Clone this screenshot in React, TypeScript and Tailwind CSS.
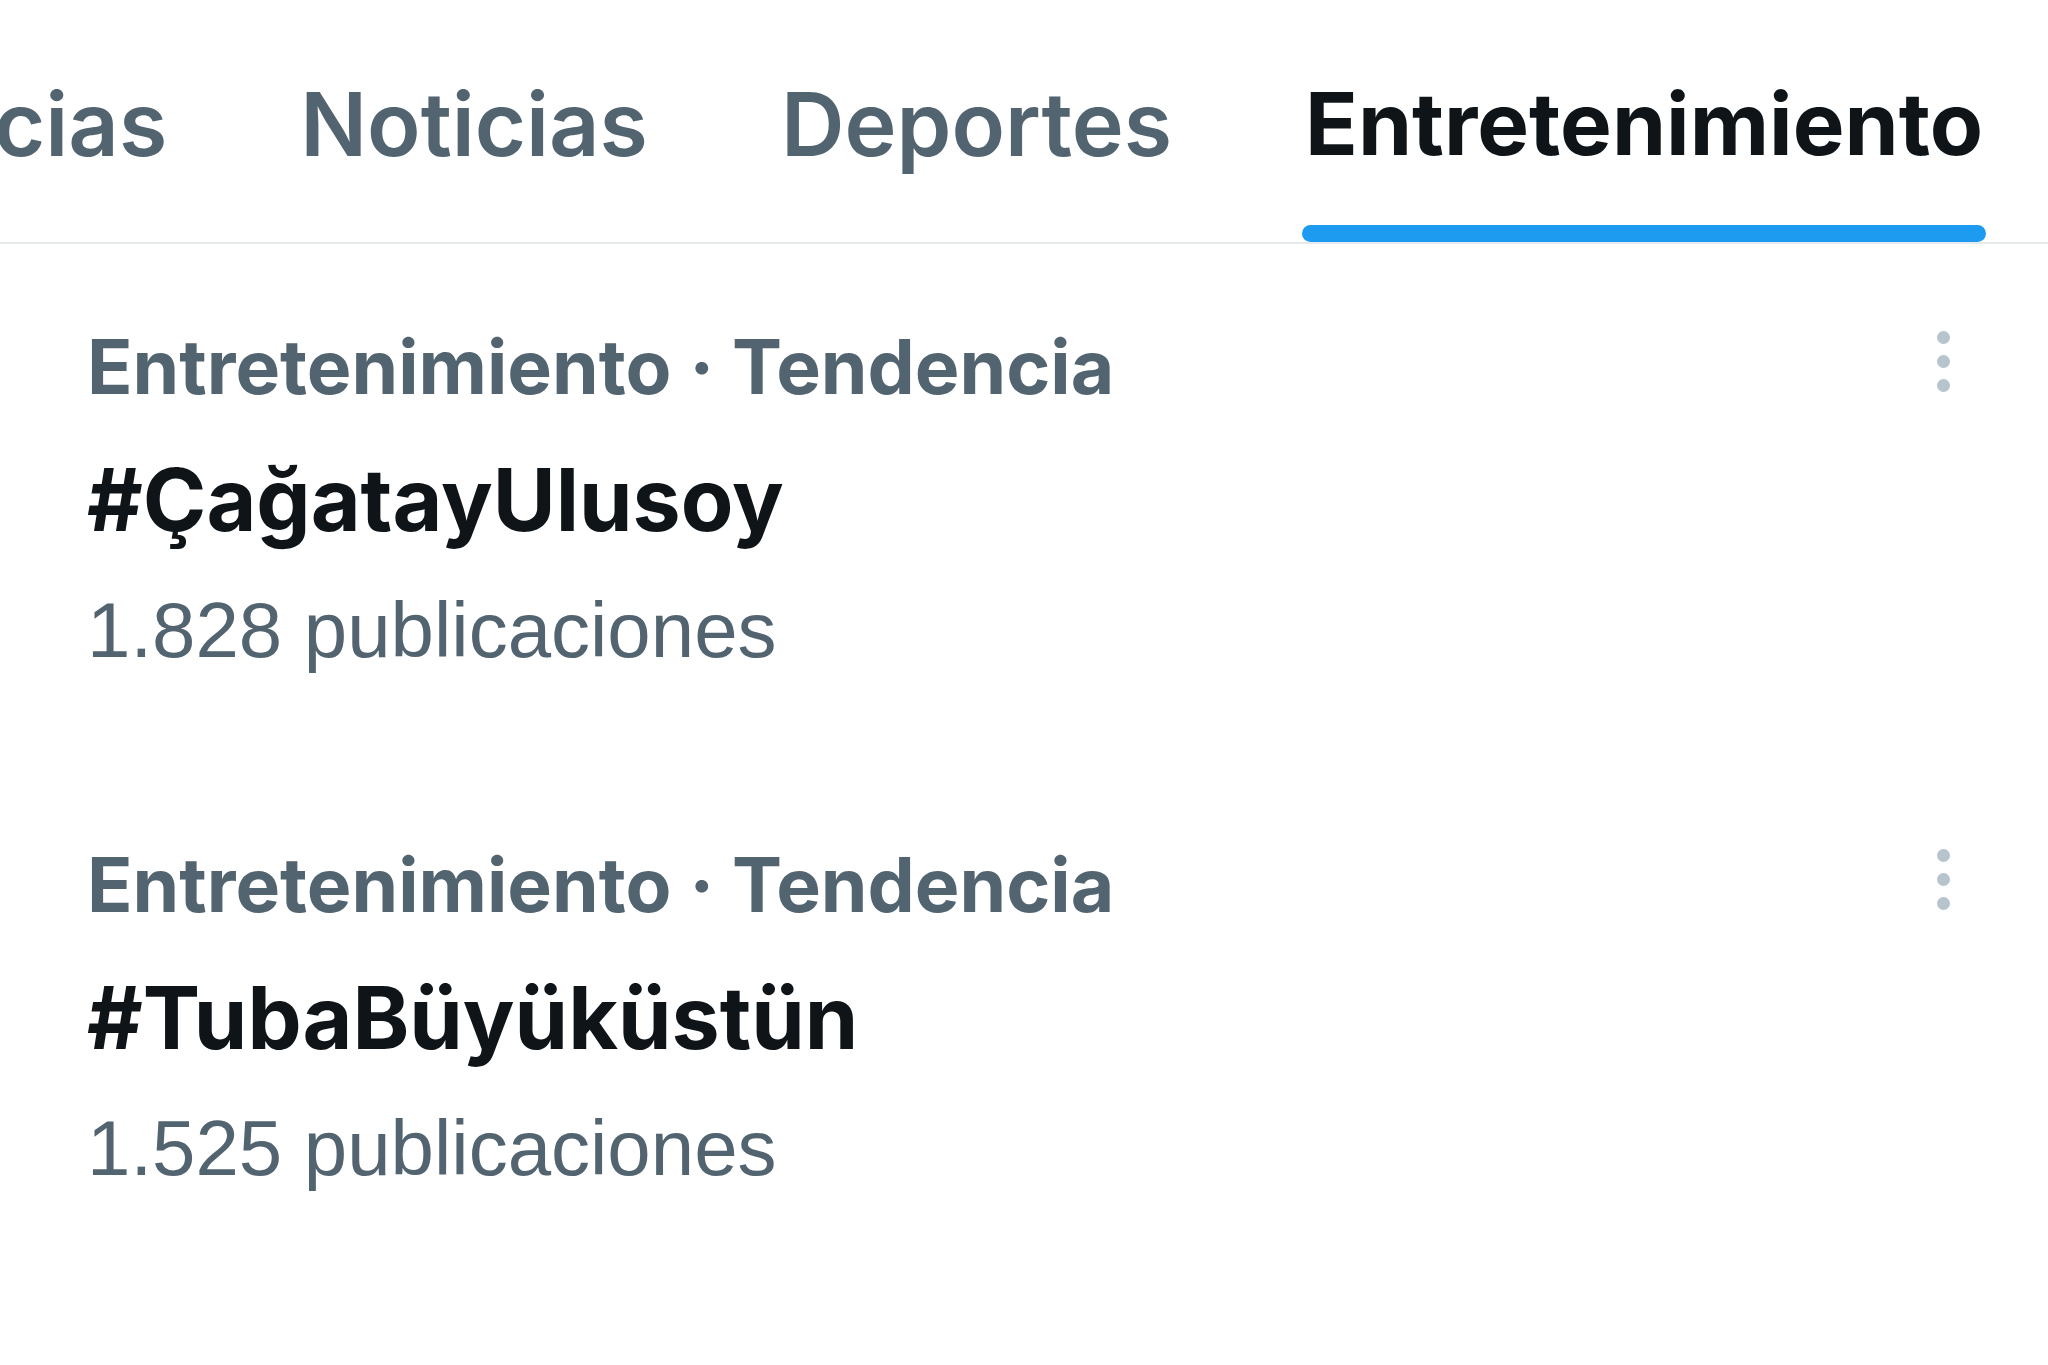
import React from "react";

const Dots = () => (
  <div className="flex flex-col items-center gap-[11px] pt-[1px]">
    <span className="block w-[13px] h-[13px] rounded-full bg-[#b6c4cd]" />
    <span className="block w-[13px] h-[13px] rounded-full bg-[#b6c4cd]" />
    <span className="block w-[13px] h-[13px] rounded-full bg-[#b6c4cd]" />
  </div>
);

const Trend = ({ tag, count }: { tag: string; count: string }) => (
  <div className="flex items-start justify-between pl-[87px] pr-[98px] pt-[85px] pb-[94px]">
    <div className="flex flex-col">
      <div className="text-[75px] leading-none font-bold text-[#536471] [font-family:Inter,sans-serif] h-[75px]">
        Entretenimiento · Tendencia
      </div>
      <div className="mt-[53px] text-[86px] leading-none font-bold text-[#0f1419] [font-family:Inter,sans-serif] h-[86px]">
        {tag}
      </div>
      <div className="mt-[48px] text-[78px] leading-none text-[#536471] [font-family:'Liberation_Sans',Arial,sans-serif] h-[77px]">
        {count}
      </div>
    </div>
    <div className="pt-[1px]">
      <Dots />
    </div>
  </div>
);

export default function App() {
  return (
    <div className="w-[2048px] h-[1365px] bg-white overflow-hidden">
      <div className="flex justify-end gap-[127px] pr-[62px] border-b-2 border-[#e6eaec] overflow-hidden whitespace-nowrap [font-family:Inter,sans-serif]">
        {["Tendencias", "Noticias", "Deportes", "Entretenimiento"].map((t, i) => {
          const active = i === 3;
          return (
            <div key={t} className="flex flex-col items-center shrink-0 pt-[80px]">
              <div
                className={
                  active
                    ? "text-[87px] leading-none font-bold text-[#0f1419] px-[3px] h-[86px]"
                    : "text-[88px] leading-none font-semibold text-[#536471] px-[3px] h-[86px]"
                }
              >
                {t}
              </div>
              <div
                className={
                  active
                    ? "mt-[59px] h-[17px] w-full rounded-full bg-[#1d9bf0]"
                    : "mt-[59px] h-[17px] w-full"
                }
              />
            </div>
          );
        })}
      </div>
      <Trend tag="#ÇağatayUlusoy" count="1.828 publicaciones" />
      <Trend tag="#TubaBüyüküstün" count="1.525 publicaciones" />
    </div>
  );
}
